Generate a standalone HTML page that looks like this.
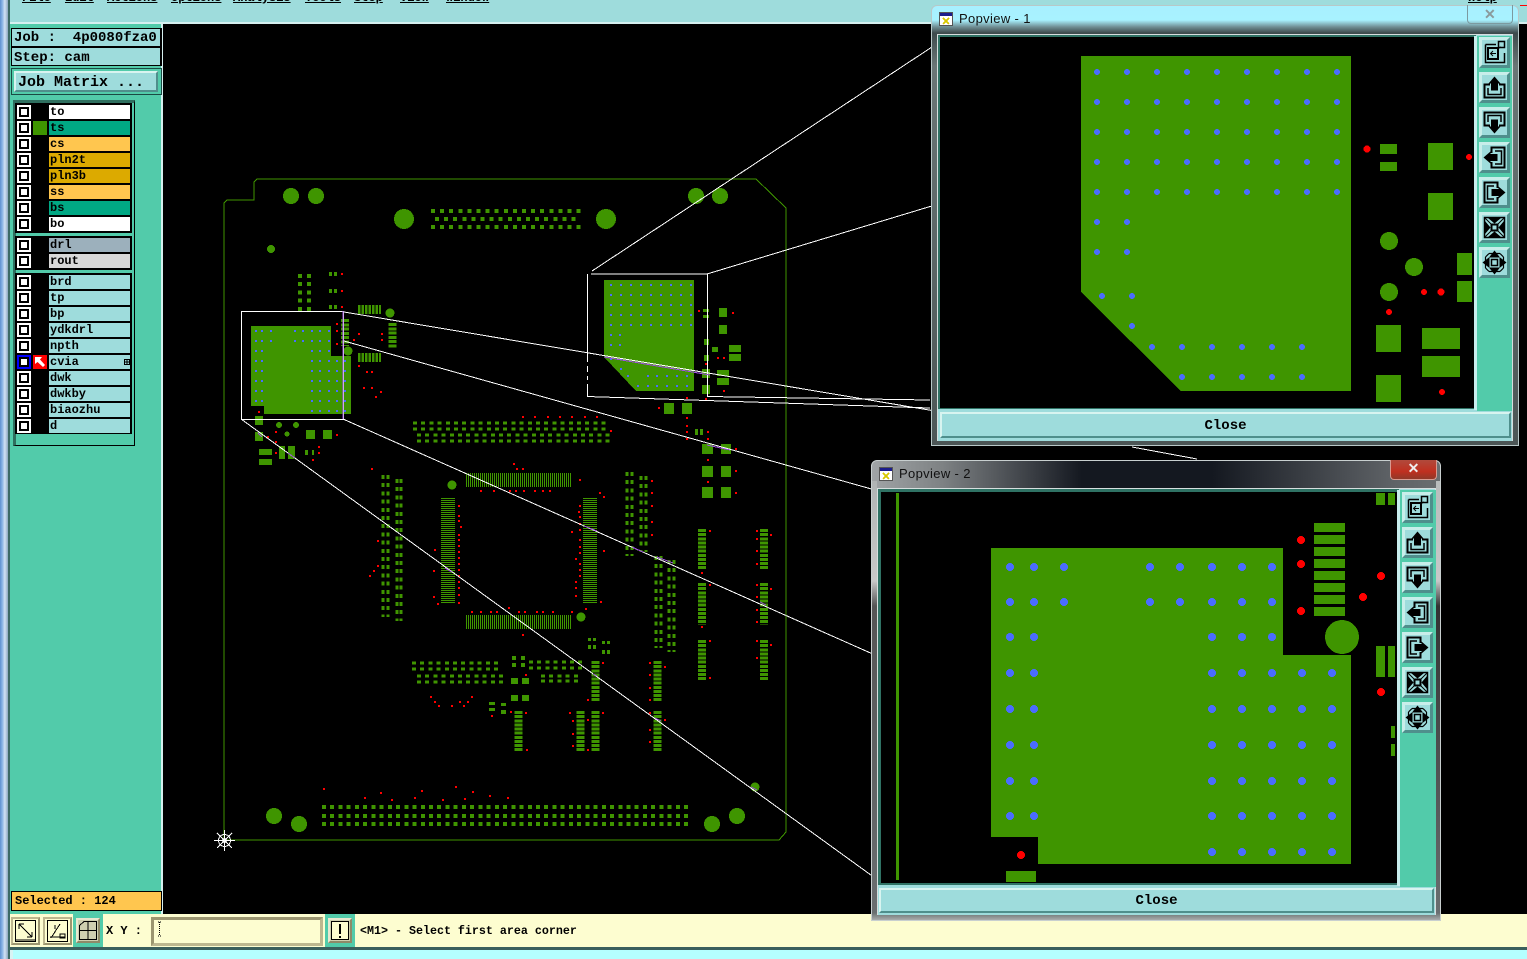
<!DOCTYPE html>
<html><head><meta charset="utf-8"><title>Popview</title>
<style>
html,body{margin:0;padding:0;background:#000}
#p{position:relative;width:1527px;height:959px;overflow:hidden;background:#000;font-family:"Liberation Mono",monospace;font-weight:bold;color:#000}
#p div,#p svg{position:absolute;box-sizing:border-box}
.m{top:-8px;font-size:12px;line-height:13px;text-decoration:underline}
.lb{background:#9edcdc;font-size:14px;line-height:20px;padding-left:2px;white-space:pre}
.r{left:17px;width:114px;height:14px}
.c{left:4px;top:4px;width:6px;height:6px;background:#fff;box-shadow:0 0 0 2px #000,0 0 0 4px #fff}
.n{left:32px;top:0;width:81px;height:14px;font-size:12px;line-height:15px;padding-left:1px;background:#9edcdc}
.bk{left:15px;width:117px;background:#000}
.b{width:33px;height:33px;border:1px solid #52cbaa;background:#52cbaa}
.f{left:0;top:0;width:31px;height:31px;border:3px solid;border-color:#c8eeea #4f8f8c #4f8f8c #c8eeea;background:#9edcdc}
.cl{background:#9edcdc;border:2px solid;border-color:#d8f4f0 #4f8f8c #4f8f8c #d8f4f0;text-align:center;font-size:14px;line-height:24px}
.tt{font-family:"Liberation Sans",sans-serif;font-weight:normal;font-size:13px;line-height:16px;letter-spacing:.35px;color:#111;white-space:pre}
.ic{width:14px;height:14px;background:#fff;border:1px solid #555}
.tb{background:#fdfdd0;border:2px solid;border-color:#bdb78f #9c9670 #9c9670 #bdb78f}
</style></head><body><div id="p">

<!-- main drawing -->
<svg style="left:0;top:0" width="1527" height="959" viewBox="0 0 1527 959" shape-rendering="crispEdges">
<defs>
<g id="g2"><path d="M8 9.500H2.500V22.500H22.500V9.500H17" fill="none" stroke="#000" stroke-width="2"/><path d="M6 13V19.500H19V13" fill="none" stroke="#000" stroke-width="1.500"/><path d="M12.500 1.500L18.500 8.500H16V15.500H9V8.500H6.500z" fill="#000"/></g>
<symbol id="i1" viewBox="0 0 25 25"><g fill="none" stroke="#000"><path d="M3.500 4.500H14M3.500 4.500V22.500H22.500V13" stroke-width="1.500"/><rect x="6" y="8" width="10" height="11" stroke-width="2"/><rect x="16.500" y="1.500" width="6" height="6" stroke-width="1.500"/><path d="M14 13.500H8.500M11 11L8.500 13.500L11 16M15 9L19 7"/></g></symbol>
<symbol id="i2" viewBox="0 0 25 25"><use href="#g2"/></symbol>
<symbol id="i3" viewBox="0 0 25 25"><g transform="translate(0 25) scale(1 -1)"><use href="#g2"/></g></symbol>
<symbol id="i4" viewBox="0 0 25 25"><g transform="rotate(-90 12.500 12.500)"><use href="#g2"/></g></symbol>
<symbol id="i5" viewBox="0 0 25 25"><g transform="rotate(90 12.500 12.500)"><use href="#g2"/></g></symbol>
<symbol id="i6" viewBox="0 0 25 25"><rect x="2.500" y="2.500" width="20" height="20" fill="none" stroke="#000" stroke-width="1.500"/><path d="M2.500 2.500L10 10M22.500 2.500L15 10M2.500 22.500L10 15M22.500 22.500L15 15" stroke="#000"/><rect x="9.500" y="9.500" width="6" height="6" fill="none" stroke="#000" stroke-width="2"/><path d="M6 3H19L12.500 8.500zM6 22H19L12.500 16.500zM3 6V19L8.500 12.500zM22 6V19L16.500 12.500z" fill="#000"/></symbol>
<symbol id="i7" viewBox="0 0 25 25"><path d="M7 3.500H18M7 21.500H18M3.500 7V18M21.500 7V18M7 3.500L3.500 7M18 3.500L21.500 7M7 21.500L3.500 18M18 21.500L21.500 18" stroke="#000" fill="none" stroke-width="1.200"/><rect x="9.500" y="9.500" width="6" height="6" fill="none" stroke="#000" stroke-width="1.500"/><path d="M12.500 .5L18 7.500H7zM12.500 24.500L18 17.500H7zM.5 12.500L7.500 7V18zM24.500 12.500L17.500 7V18z" fill="#000"/></symbol>
</defs>

<!-- board outline -->
<path d="M224 840V203L227 200H254V182L257 179H756L786 208V832L779 840H224" fill="none" stroke="#3f9500"/>

<!-- copper, pads -->
<g fill="#3f9500">
<circle cx="291" cy="196" r="8"/><circle cx="316" cy="196" r="8"/><circle cx="404" cy="219" r="10"/><circle cx="606" cy="219" r="10"/><circle cx="696" cy="196" r="8"/><circle cx="720" cy="196" r="8"/><circle cx="271" cy="249" r="4"/><circle cx="274" cy="816" r="8"/><circle cx="299" cy="824" r="8"/><circle cx="712" cy="824" r="8"/><circle cx="737" cy="816" r="8"/><circle cx="755" cy="787" r="4.500"/><circle cx="390" cy="313" r="4.500"/><circle cx="452" cy="485" r="4.500"/><circle cx="581" cy="617" r="4.500"/><circle cx="348" cy="351" r="4.500"/><circle cx="296" cy="425" r="3"/><circle cx="287" cy="434" r="2.500"/><circle cx="279" cy="425" r="3"/>
<path d="M251 326H331V356H351V414H264V406H251zM604 280H694V391H636L604 357z"/>
<path d="M664 403h10v11h-10zM682 403h10v11h-10zM695 429h3v6h-3zM700 429h3v6h-3zM702 444h11v10h-11zM721 444h10v10h-10zM702 466h11v11h-11zM721 466h10v11h-10zM702 487h11v11h-11zM721 487h10v11h-10zM703 309h6v3h-6zM703 315h6v3h-6zM719 308h8v9h-8zM719 325h8v9h-8zM704 339h5v6h-5zM712 347h6v5h-6zM729 345h12v7h-12zM729 354h12v7h-12zM704 355h5v6h-5zM702 369h8v9h-8zM717 370h12v6h-12zM717 378h12v7h-12zM702 385h8v9h-8zM306 430h9v9h-9zM323 430h9v9h-9zM255 416h8v9h-8zM255 432h8v9h-8zM259 449h13v6h-13zM259 459h13v6h-13zM279 446h6v13h-6zM288 446h7v13h-7zM305 450h3v5h-3zM312 450h2v5h-2zM511 678h7v6h-7zM522 678h7v6h-7zM511 695h7v6h-7zM522 695h7v6h-7zM489 702h6v3h-6zM489 708h6v3h-6zM501 703h5v3h-5zM501 710h5v4h-5zM329 272h3v4h-3zM334 272h3v4h-3zM329 289h3v4h-3zM334 289h3v4h-3zM329 305h3v4h-3zM334 305h3v4h-3zM588 638h3v3h-3zM593 638h3v3h-3zM602 641h3v3h-3zM607 641h3v3h-3zM588 645h3v4h-3zM593 645h3v4h-3zM602 650h3v4h-3zM607 650h3v4h-3z"/>
</g>
<g fill="none" stroke="#3f9500">
<path d="M431 211H582M431 227H582" stroke-width="4" stroke-dasharray="4 5.100"/>
<path d="M435 219H578" stroke-width="4" stroke-dasharray="4 5.100"/>
<path d="M322 807H692M322 816H692M322 824H692" stroke-width="4" stroke-dasharray="4 4.230"/>
<path d="M413 423H607M413 429H607" stroke-width="3" stroke-dasharray="4 4.200"/>
<path d="M417 435H611M417 441H611" stroke-width="3" stroke-dasharray="4 4.200"/>
<path d="M412 663H499M412 669H499M417 676H503M417 682H503M529 662H582M529 668H582M541 676H578M541 681H578" stroke-width="3" stroke-dasharray="4 4.200"/>
<path d="M512 658H525M512 665H525" stroke-width="4" stroke-dasharray="4 5"/>
<path d="M383 475V617M388 475V617M397 479V621M401 479V621M627 472V556M632 472V556M641 476V552M646 476V552M656 556V648M661 556V648M669 560V652M674 560V652" stroke-width="3" stroke-dasharray="4 4.200"/>
<path d="M300 274V311M309 274V311" stroke-width="4" stroke-dasharray="4 4.200"/>
<path d="M466 480H572M466 622H572" stroke-width="14" stroke-dasharray="1 1"/>
<path d="M448 498V604M590 498V604" stroke-width="14" stroke-dasharray="1 1"/>
<path d="M702 529V570M702 583V625M702 640V681M764 529V570M764 583V625M764 640V681M595.500 661V702M657.500 661V702M518.500 711V752M580.500 711V752M595.500 711V752M657.500 711V752" stroke-width="8" stroke-dasharray="3 1.130"/>
<path d="M392.500 323V349M345 319V346" stroke-width="8" stroke-dasharray="3 1.300"/>
<path d="M358 309.500H381M358 357.500H381" stroke-width="9" stroke-dasharray="2.500 1"/>
</g>
<path fill="none" stroke="#4a6cff" stroke-width="2" stroke-linecap="square" d="M256 331h.01M262 331h.01M271 331h.01M295 331h.01M303 331h.01M312 331h.01M320 331h.01M329 331h.01M256 341h.01M262 341h.01M271 341h.01M295 341h.01M303 341h.01M312 341h.01M320 341h.01M329 341h.01M256 351h.01M262 351h.01M312 351h.01M320 351h.01M329 351h.01M256 361h.01M262 361h.01M312 361h.01M320 361h.01M329 361h.01M337 361h.01M345 361h.01M256 371h.01M262 371h.01M312 371h.01M320 371h.01M329 371h.01M337 371h.01M345 371h.01M256 381h.01M262 381h.01M312 381h.01M320 381h.01M329 381h.01M337 381h.01M345 381h.01M256 391h.01M262 391h.01M312 391h.01M320 391h.01M329 391h.01M337 391h.01M345 391h.01M256 401h.01M262 401h.01M312 401h.01M320 401h.01M329 401h.01M337 401h.01M345 401h.01M312 411h.01M320 411h.01M329 411h.01M337 411h.01M345 411h.01"/>
<g fill="none" stroke="#4a6cff" stroke-width="2">
<path d="M610 285H692M610 295H692M610 305H692M610 315H692M610 325H692" stroke-dasharray="2 8"/>
<path d="M610 335H622M610 345H622" stroke-dasharray="2 7"/>
<path d="M610 359h2M620 359h2M620 369h2M627 376h2M647 376h2M656 376h2M666 376h2M676 376h2M686 376h2M637 386h2M647 386h2M656 386h2M666 386h2M676 386h2M686 386h2"/>
</g>
<path fill="none" stroke="#f00" stroke-width="2" stroke-linecap="square" d="M342 274h.01M342 291h.01M342 307h.01M337 324h.01M337 331h.01M337 344h.01M354 340h.01M359 334h.01M382 334h.01M382 340h.01M359 366h.01M367 372h.01M372 372h.01M364 388h.01M372 388h.01M381 392h.01M376 397h.01M259 412h.01M268 437h.01M276 432h.01M276 442h.01M276 453h.01M337 435h.01M319 447h.01M319 453h.01M313 460h.01M523 417h.01M535 417h.01M548 417h.01M560 417h.01M572 417h.01M585 417h.01M597 417h.01M611 431h.01M372 469h.01M514 464h.01M517 469h.01M523 469h.01M580 480h.01M600 493h.01M604 497h.01M481 491h.01M494 491h.01M510 491h.01M516 491h.01M524 491h.01M535 491h.01M543 491h.01M550 491h.01M459 506h.01M459 516h.01M459 521h.01M461 527h.01M459 535h.01M459 540h.01M459 546h.01M459 552h.01M459 558h.01M459 564h.01M459 570h.01M459 576h.01M459 582h.01M459 588h.01M459 595h.01M459 603h.01M435 550h.01M434 571h.01M434 597h.01M438 604h.01M378 541h.01M378 566h.01M374 571h.01M370 576h.01M580 506h.01M580 517h.01M580 524h.01M580 530h.01M580 540h.01M580 547h.01M580 553h.01M580 564h.01M580 570h.01M580 576h.01M579 512h.01M572 532h.01M576 559h.01M576 582h.01M576 588h.01M576 596h.01M604 551h.01M601 602h.01M586 609h.01M472 612h.01M481 612h.01M491 612h.01M497 612h.01M519 612h.01M525 612h.01M537 612h.01M543 612h.01M553 612h.01M572 612h.01M509 608h.01M523 635h.01M526 675h.01M659 408h.01M687 418h.01M687 426h.01M687 432h.01M687 439h.01M708 432h.01M708 439h.01M736 449h.01M708 460h.01M736 471h.01M708 482h.01M736 493h.01M652 481h.01M652 493h.01M652 506h.01M652 522h.01M652 535h.01M710 531h.01M702 573h.01M710 585h.01M702 627h.01M710 641h.01M710 678h.01M757 531h.01M757 539h.01M771 535h.01M757 551h.01M757 564h.01M757 585h.01M771 589h.01M757 597h.01M757 610h.01M757 622h.01M757 641h.01M771 645h.01M757 658h.01M603 663h.01M588 700h.01M650 663h.01M665 667h.01M650 675h.01M650 688h.01M650 700h.01M650 713h.01M665 720h.01M650 730h.01M650 742h.01M570 713h.01M573 721h.01M573 734h.01M573 746h.01M588 720h.01M588 750h.01M603 713h.01M526 713h.01M511 712h.01M527 750h.01M492 716h.01M431 697h.01M435 702h.01M439 706h.01M452 706h.01M460 702h.01M464 706h.01M468 702h.01M472 697h.01M415 798h.01M422 791h.01M443 800h.01M456 787h.01M465 799h.01M473 792h.01M490 796h.01M508 798h.01M324 789h.01M365 798h.01M381 793h.01M392 800h.01M699 311h.01M733 313h.01M706 364h.01M718 358h.01M724 358h.01M724 391h.01M706 399h.01M687 398h.01"/>
<g fill="none" stroke="#fff">
<path d="M241.500 311.500H343.500V419.500H241.500z"/>
<path d="M344 312L935 411M344 341L875 490M343 419L875 655M241 419L875 878"/>
<path d="M587.500 274V362M587.500 366V372M587.500 376V380M587.500 384V397M591 274H707.500V397"/>
<path d="M592 271L935 45M707 274L935 205"/>
<path d="M587 396.500L930 408M707 396.500L930 400"/>
<path d="M1132 447L1197 459"/>
</g>
<path d="M343 311V419M604 357L710 375M584 526L597 531M258 433L262 437M288 453L295 458M445 568L452 572M632 547L643 552M657 557L673 563M593 674L597 676M655 718L661 721M707 445L730 450M760 602L766 605M751 787L757 790" fill="none" stroke="#a050e0"/>
<g fill="none" stroke="#fff"><circle cx="224.500" cy="840.500" r="6"/><circle cx="224.500" cy="840.500" r="2"/><path d="M214 840.500H235M224.500 830V851M217 833L232 848M232 833L217 848"/></g>
</svg>

<!-- chrome -->
<div style="left:0;top:0;width:8px;height:959px;background:linear-gradient(90deg,#5f90cf 0,#8db6e6 30%,#d2e2f4 60%,#8da6c0 100%)"></div>
<div style="left:8px;top:0;width:2px;height:959px;background:#3d6a66"></div>
<div style="left:10px;top:0;width:1517px;height:24px;background:#9edcdc;border-bottom:2px solid #d6f0f0"></div>
<div style="left:1520px;top:5px;width:7px;height:1px;background:#f00"></div>
<div class="m" style="left:22px">File</div><div class="m" style="left:65px">Edit</div><div class="m" style="left:107px">Actions</div><div class="m" style="left:171px">Options</div><div class="m" style="left:233px">Analysis</div><div class="m" style="left:305px">Tools</div><div class="m" style="left:354px">Step</div><div class="m" style="left:400px">View</div><div class="m" style="left:446px">Window</div><div class="m" style="left:1468px">Help</div>

<!-- left panel -->
<div style="left:10px;top:24px;width:153px;height:890px;background:#52cbaa;border-right:2px solid #d6f0f0"></div>
<div style="left:11px;top:28px;width:151px;height:38px;background:#000"></div>
<div class="lb" style="left:12px;top:29px;width:148px;height:17px;line-height:19px">Job :  4p0080fza0</div>
<div class="lb" style="left:12px;top:48px;width:148px;height:17px">Step: cam</div>
<div style="left:11px;top:68px;width:151px;height:27px;border:1px solid #1b4a44"></div>
<div class="cl" style="left:14px;top:71px;width:144px;height:21px;font-size:15px;line-height:19px;text-align:left;padding-left:2px;white-space:pre">Job Matrix ...</div>
<div style="left:13px;top:100px;width:122px;height:346px;border:1px solid #000;border-left:3px solid #2f6f5f;border-top:3px solid #2f6f5f;background:#52cbaa"></div>
<div class="bk" style="top:103px;height:130px"></div>
<div class="bk" style="top:236px;height:34px"></div>
<div class="bk" style="top:273px;height:161px"></div>
<div style="left:33px;top:121px;width:14px;height:14px;background:#3f9500"></div>

<div class="r" style="top:105px"><div class="c"></div><div class="n" style="background:#fff">to</div></div>
<div class="r" style="top:121px"><div class="c"></div><div class="n" style="background:#00a884">ts</div></div>
<div class="r" style="top:137px"><div class="c"></div><div class="n" style="background:#ffc64f">cs</div></div>
<div class="r" style="top:153px"><div class="c"></div><div class="n" style="background:#dcaa00">pln2t</div></div>
<div class="r" style="top:169px"><div class="c"></div><div class="n" style="background:#dcaa00">pln3b</div></div>
<div class="r" style="top:185px"><div class="c"></div><div class="n" style="background:#ffc64f">ss</div></div>
<div class="r" style="top:201px"><div class="c"></div><div class="n" style="background:#00a884">bs</div></div>
<div class="r" style="top:217px"><div class="c"></div><div class="n" style="background:#fff">bo</div></div>
<div class="r" style="top:238px"><div class="c"></div><div class="n" style="background:#9cb0bc">drl</div></div>
<div class="r" style="top:254px"><div class="c"></div><div class="n" style="background:#d8d8d8">rout</div></div>
<div class="r" style="top:275px"><div class="c"></div><div class="n">brd</div></div>
<div class="r" style="top:291px"><div class="c"></div><div class="n">tp</div></div>
<div class="r" style="top:307px"><div class="c"></div><div class="n">bp</div></div>
<div class="r" style="top:323px"><div class="c"></div><div class="n">ydkdrl</div></div>
<div class="r" style="top:339px"><div class="c"></div><div class="n">npth</div></div>
<div class="r" style="top:355px"><div class="c" style="box-shadow:0 0 0 2px #000,0 0 0 4px #0000ff"></div><div class="n">cvia</div></div>
<div class="r" style="top:371px"><div class="c"></div><div class="n">dwk</div></div>
<div class="r" style="top:387px"><div class="c"></div><div class="n">dwkby</div></div>
<div class="r" style="top:403px"><div class="c"></div><div class="n">biaozhu</div></div>
<div class="r" style="top:419px"><div class="c"></div><div class="n">d</div></div>
<svg style="left:33px;top:355px" width="14" height="14" viewBox="0 0 14 14"><rect width="14" height="14" fill="#f00"/><path d="M2 2H9L7 4.500L12 10L10 12L4.500 7L2 9z" fill="#fff"/></svg>
<svg style="left:124px;top:359px" width="6" height="6" viewBox="0 0 6 6" shape-rendering="crispEdges"><path d="M.5 .5H5.500V5.500H.5zM3 .5V5.500M.5 3H5.500" fill="none" stroke="#000"/></svg>

<div style="left:11px;top:891px;width:151px;height:20px;background:#ffc64f;border:1px solid #000;font-size:12px;line-height:18px;padding-left:3px">Selected : 124</div>

<!-- bottom toolbar -->
<div style="left:10px;top:914px;width:1517px;height:33px;background:#fdfdd0"></div>
<div style="left:10px;top:947px;width:1517px;height:3px;background:#3a5f5c"></div>
<div style="left:10px;top:950px;width:1517px;height:9px;background:#b5ffff;border-left:3px solid #d8f4f4"></div>
<div class="tb" style="left:11px;top:917px;width:29px;height:28px"></div>
<div class="tb" style="left:43px;top:917px;width:29px;height:28px"></div>
<div style="left:73px;top:914px;width:30px;height:33px;background:#52cbaa"></div>
<div style="left:76px;top:918px;width:24px;height:25px;background:#cfcfb0;border:2px solid;border-color:#e8e8d0 #8e8a68 #8e8a68 #e8e8d0"></div>
<svg style="left:15px;top:920px" width="21" height="22" viewBox="0 0 21 22" shape-rendering="crispEdges"><rect x=".5" y=".5" width="20" height="21" fill="#fdfdd0" stroke="#000"/><path d="M4 4L17 17M4 4H9M4 4V9M17 17H12M17 17V12M1 20H20" fill="none" stroke="#000"/></svg>
<svg style="left:47px;top:920px" width="21" height="22" viewBox="0 0 21 22" shape-rendering="crispEdges"><rect x=".5" y=".5" width="20" height="21" fill="#fdfdd0" stroke="#000"/><path d="M4 18L13 4M3 17H18M8 5V9M13 14H18V18H13z" fill="none" stroke="#000"/></svg>
<svg style="left:79px;top:921px" width="18" height="19" viewBox="0 0 18 19" shape-rendering="crispEdges"><path d="M.5 18.500V4.500L5 .5H17.500V18.500zM9 .5V18.500M.5 9.500H17.500" fill="none" stroke="#000"/></svg>
<div style="left:106px;top:923px;font-size:12px;line-height:16px;white-space:pre">X Y :</div>
<div style="left:151px;top:917px;width:172px;height:29px;background:#fdfdd0;border:3px solid;border-color:#9c9670 #bdb78f #bdb78f #9c9670"></div>
<svg style="left:157px;top:921px" width="5" height="16" viewBox="0 0 5 16" shape-rendering="crispEdges"><path d="M1 1H4M2.500 1V15M1 15H4" stroke="#000" stroke-dasharray="1 1" fill="none"/></svg>
<div style="left:325px;top:914px;width:30px;height:33px;background:#52cbaa"></div>
<div style="left:328px;top:918px;width:24px;height:25px;background:#cfcfb0;border:2px solid;border-color:#e8e8d0 #8e8a68 #8e8a68 #e8e8d0"></div>
<svg style="left:331px;top:921px" width="18" height="19" viewBox="0 0 18 19" shape-rendering="crispEdges"><rect x=".5" y=".5" width="17" height="18" fill="#fdfdd0" stroke="#000"/><path d="M9 3V13M9 15V17" stroke="#000" stroke-width="2"/></svg>
<div style="left:360px;top:923px;font-size:11.670px;line-height:16px;white-space:pre">&lt;M1&gt; - Select first area corner</div>

<!-- Popview 1 -->
<div style="left:931px;top:5px;width:588px;height:441px;border:1px solid #b8c8c8;border-radius:6px 6px 0 0;background:linear-gradient(#a8f0ff 0,#a8f2ff 14px,#6f8c92 21px,#3d4a4c 27px,#6a7676 60px,#4c5656 100%)"></div>
<div style="left:1467px;top:5px;width:46px;height:19px;border:1px solid #7c9aa0;border-top:0;border-radius:0 0 4px 4px"></div>
<div style="left:1484px;top:5px;font:bold 14px/18px 'Liberation Sans',sans-serif;color:#8a9a9c">✕</div>
<div class="ic" style="left:939px;top:12px"></div>
<svg style="left:939px;top:12px" width="14" height="14" viewBox="0 0 14 14" shape-rendering="crispEdges"><rect x="1" y="1" width="12" height="3" fill="#1c1c8c"/><path d="M4 6L10 12M10 6L4 12" stroke="#d8c800" stroke-width="2"/></svg>
<div class="tt" style="left:959px;top:11px">Popview - 1</div>
<div style="left:937px;top:34px;width:576px;height:407px;background:#9edcdc;border:1px solid #d6dede;border-bottom:0"></div>
<div style="left:938px;top:35px;width:538px;height:374px;background:#2f7264"></div>
<div style="left:1474px;top:36px;width:3px;height:374px;background:#c8eeee"></div>
<div style="left:1477px;top:36px;width:35px;height:375px;background:#52cbaa"></div>
<svg style="left:940px;top:37px" width="534" height="371" viewBox="940 37 534 371" shape-rendering="crispEdges">
<rect x="940" y="37" width="534" height="371" fill="#000"/>
<g fill="#3f9500"><path d="M1081 56H1351V391H1181L1081 292zM1380 144h17v10h-17zM1380 162h17v9h-17zM1428 143h25v27h-25zM1428 193h25v27h-25zM1457 253h15v22h-15zM1457 281h15v21h-15zM1376 325h25v27h-25zM1422 328h38v21h-38zM1422 356h38v21h-38zM1376 375h25v27h-25z"/><circle cx="1389" cy="241" r="9"/><circle cx="1414" cy="267" r="9"/><circle cx="1389" cy="292" r="9"/></g>
<g fill="none" stroke="#4a6cff" stroke-width="6" stroke-linecap="round"><path d="M1097 72H1340M1097 102H1340M1097 132H1340M1097 162H1340M1097 192H1340M1097 222H1130M1097 252H1130M1102 296H1135" stroke-dasharray="0 30"/><path d="M1132 326h.01M1152 347h.01M1182 347h.01M1212 347h.01M1242 347h.01M1272 347h.01M1302 347h.01M1182 377h.01M1212 377h.01M1242 377h.01M1272 377h.01M1302 377h.01"/></g>
<g fill="#f00"><circle cx="1367" cy="149" r="3.500"/><circle cx="1469" cy="157" r="3"/><circle cx="1424" cy="292" r="3"/><circle cx="1441" cy="292" r="3.500"/><circle cx="1389" cy="312" r="3"/><circle cx="1442" cy="392" r="3"/></g>
</svg>
<div class="b" style="left:1478px;top:36px"><div class="f"><svg width="25" height="25"><use href="#i1"/></svg></div></div>
<div class="b" style="left:1478px;top:71px"><div class="f"><svg width="25" height="25"><use href="#i2"/></svg></div></div>
<div class="b" style="left:1478px;top:106px"><div class="f"><svg width="25" height="25"><use href="#i3"/></svg></div></div>
<div class="b" style="left:1478px;top:141px"><div class="f"><svg width="25" height="25"><use href="#i4"/></svg></div></div>
<div class="b" style="left:1478px;top:176px"><div class="f"><svg width="25" height="25"><use href="#i5"/></svg></div></div>
<div class="b" style="left:1478px;top:211px"><div class="f"><svg width="25" height="25"><use href="#i6"/></svg></div></div>
<div class="b" style="left:1478px;top:246px"><div class="f"><svg width="25" height="25"><use href="#i7"/></svg></div></div>
<div class="cl" style="left:940px;top:412px;width:571px;height:26px">Close</div>

<!-- Popview 2 -->
<div style="left:871px;top:460px;width:570px;height:461px;border:1px solid #c8cfcf;border-radius:6px 6px 0 0;background:linear-gradient(90deg,#a0a4a6 0,#7e8284 70px,#141820 210px,#141820 340px,#5e6266 520px,#6a6e70 100%)"></div>
<div style="left:872px;top:481px;width:5px;height:433px;background:linear-gradient(#b0b4b4,#c8c8c8 100px,#555 125px,#6a6e70 100%)"></div>
<div style="left:1436px;top:481px;width:4px;height:433px;background:linear-gradient(#b8bcbc,#c8c8c8 100px,#333 125px,#6a6e70 100%)"></div>
<div style="left:872px;top:913px;width:568px;height:7px;background:linear-gradient(#6a7070,#a8acac)"></div>
<div style="left:1390px;top:460px;width:47px;height:20px;border:1px solid #d89a90;border-top:0;border-radius:0 0 4px 4px;background:linear-gradient(#b04a3c,#c03020 60%,#903828);text-align:center;font:bold 14px/17px 'Liberation Sans',sans-serif;color:#eee">✕</div>
<div class="ic" style="left:879px;top:467px"></div>
<svg style="left:879px;top:467px" width="14" height="14" viewBox="0 0 14 14" shape-rendering="crispEdges"><rect x="1" y="1" width="12" height="3" fill="#1c1c8c"/><path d="M4 6L10 12M10 6L4 12" stroke="#d8c800" stroke-width="2"/></svg>
<div class="tt" style="left:899px;top:466px">Popview - 2</div>
<div style="left:877px;top:488px;width:559px;height:427px;background:#9edcdc;border:1px solid #d6dede;border-bottom:0"></div>
<div style="left:878px;top:489px;width:521px;height:396px;background:#2f7264"></div>
<div style="left:1397px;top:490px;width:3px;height:396px;background:#c8eeee"></div>
<div style="left:1400px;top:490px;width:36px;height:397px;background:#52cbaa"></div>
<svg style="left:881px;top:492px" width="516" height="391" viewBox="881 492 516 391" shape-rendering="crispEdges">
<rect x="881" y="492" width="516" height="391" fill="#000"/>
<g fill="#3f9500"><path d="M896 493h3v387h-3zM991 548H1283V655H1351V864H1038V837H991zM1314 523h31v9h-31zM1314 535h31v9h-31zM1314 547h31v9h-31zM1314 559h31v9h-31zM1314 571h31v9h-31zM1314 583h31v9h-31zM1314 595h31v9h-31zM1314 607h31v9h-31zM1376 493h9v12h-9zM1388 493h7v12h-7zM1376 646h9v31h-9zM1388 646h7v31h-7zM1391 726h4v12h-4zM1391 744h4v12h-4zM1006 871h30v11h-30z"/><circle cx="1342" cy="637" r="17"/></g>
<path fill="none" stroke="#4a6cff" stroke-width="8" stroke-linecap="round" d="M1010 567h.01M1034 567h.01M1064 567h.01M1150 567h.01M1180 567h.01M1212 567h.01M1242 567h.01M1272 567h.01M1010 602h.01M1034 602h.01M1064 602h.01M1150 602h.01M1180 602h.01M1212 602h.01M1242 602h.01M1272 602h.01M1010 637h.01M1034 637h.01M1212 637h.01M1242 637h.01M1272 637h.01M1010 673h.01M1034 673h.01M1212 673h.01M1242 673h.01M1272 673h.01M1302 673h.01M1332 673h.01M1010 709h.01M1034 709h.01M1212 709h.01M1242 709h.01M1272 709h.01M1302 709h.01M1332 709h.01M1010 745h.01M1034 745h.01M1212 745h.01M1242 745h.01M1272 745h.01M1302 745h.01M1332 745h.01M1010 781h.01M1034 781h.01M1212 781h.01M1242 781h.01M1272 781h.01M1302 781h.01M1332 781h.01M1010 816h.01M1034 816h.01M1212 816h.01M1242 816h.01M1272 816h.01M1302 816h.01M1332 816h.01M1212 852h.01M1242 852h.01M1272 852h.01M1302 852h.01M1332 852h.01"/>
<g fill="#f00"><circle cx="1301" cy="540" r="4"/><circle cx="1301" cy="564" r="4"/><circle cx="1381" cy="576" r="4"/><circle cx="1363" cy="597" r="4"/><circle cx="1301" cy="611" r="4"/><circle cx="1381" cy="692" r="4"/><circle cx="1021" cy="855" r="4"/></g>
</svg>
<div class="b" style="left:1401px;top:491px"><div class="f"><svg width="25" height="25"><use href="#i1"/></svg></div></div>
<div class="b" style="left:1401px;top:526px"><div class="f"><svg width="25" height="25"><use href="#i2"/></svg></div></div>
<div class="b" style="left:1401px;top:561px"><div class="f"><svg width="25" height="25"><use href="#i3"/></svg></div></div>
<div class="b" style="left:1401px;top:596px"><div class="f"><svg width="25" height="25"><use href="#i4"/></svg></div></div>
<div class="b" style="left:1401px;top:631px"><div class="f"><svg width="25" height="25"><use href="#i5"/></svg></div></div>
<div class="b" style="left:1401px;top:666px"><div class="f"><svg width="25" height="25"><use href="#i6"/></svg></div></div>
<div class="b" style="left:1401px;top:701px"><div class="f"><svg width="25" height="25"><use href="#i7"/></svg></div></div>
<div class="cl" style="left:879px;top:888px;width:555px;height:25px;line-height:23px">Close</div>

</div></body></html>
